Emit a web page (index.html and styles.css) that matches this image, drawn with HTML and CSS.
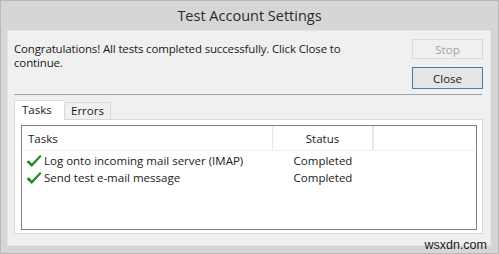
FILE: index.html
```html
<!DOCTYPE html>
<html lang="en">
<head>
  <meta charset="UTF-8" />
  <title>Test Account Settings</title>
  <link rel="stylesheet" href="styles.css">
</head>
<body>
  <div class="window">
    <div class="titlebar">Test Account Settings</div>

    <div class="client">
      <div class="top-row">
        <p class="message">Congratulations! All tests completed successfully. Click Close to continue.</p>
        <div class="buttons">
          <button class="btn btn-disabled" disabled>Stop</button>
          <button class="btn btn-default">Close</button>
        </div>
      </div>

      <div class="separator"></div>

      <div class="tabs">
        <div class="tab tab-active">Tasks</div>
        <div class="tab">Errors</div>
      </div>

      <div class="tab-panel">
        <div class="list-view">
          <div class="list-header">
            <div class="col col-task">Tasks</div>
            <div class="col col-status">Status</div>
            <div class="col col-rest"></div>
          </div>
          <div class="list-row">
            <div class="col col-task">
              <svg class="check" width="16" height="14" viewBox="0 0 16 14">
                <path d="M0.5 8 L2.8 6.3 L5.8 9.6 L14 1 L15.6 2.3 L5.8 13 Z" fill="#1e8c1e"/>
              </svg>
              Log onto incoming mail server (IMAP)
            </div>
            <div class="col col-status">Completed</div>
          </div>
          <div class="list-row">
            <div class="col col-task">
              <svg class="check" width="16" height="14" viewBox="0 0 16 14">
                <path d="M0.5 8 L2.8 6.3 L5.8 9.6 L14 1 L15.6 2.3 L5.8 13 Z" fill="#1e8c1e"/>
              </svg>
              Send test e-mail message
            </div>
            <div class="col col-status">Completed</div>
          </div>
        </div>
      </div>
    </div>

    <div class="watermark">wsxdn.com</div>
  </div>
</body>
</html>
```

FILE: styles.css
```css
* {
  box-sizing: border-box;
  margin: 0;
  padding: 0;
}

body {
  width: 499px;
  height: 254px;
  overflow: hidden;
  font-family: 'Open Sans', 'Noto Sans', sans-serif;
  color: #1a1a1a;
}

/* Window frame */
.window {
  position: relative;
  width: 499px;
  height: 254px;
  background-color: #d6d6d6;
  border: 1px solid #b9b9b9;
  display: flex;
  flex-direction: column;
}

.titlebar {
  height: 29px;
  font-size: 14.5px;
  color: #2b2b2b;
  text-align: center;
  line-height: 29px;
}

/* Client area */
.client {
  margin: 0 7px 7px 6px;
  flex: 1;
  background-color: #f0f0f0;
  border: 1px solid #e6e6e6;
  padding: 8px 7px 11px 6px;
  display: flex;
  flex-direction: column;
}

.top-row {
  display: flex;
  justify-content: space-between;
}

.message {
  width: 330px;
  font-size: 11.5px;
  line-height: 14px;
  padding-top: 3px;
  letter-spacing: -0.15px;
}

.buttons {
  display: flex;
  flex-direction: column;
  gap: 8px;
}

.btn {
  width: 71px;
  font-family: inherit;
  font-size: 11.5px;
  border: 1px solid #adadad;
  background-color: #e1e1e1;
  color: #1a1a1a;
}

.btn-disabled {
  height: 20px;
  background-color: #f0f0f0;
  border-color: #d9d9d9;
  color: #a3a3a3;
}

.btn-default {
  height: 22px;
  border-color: #3c7fb1;
  background-color: #e5e5e5;
}

.separator {
  height: 1px;
  background-color: #a0a0a0;
  margin: 5px 1px 0 0;
}

/* Tabs */
.tabs {
  display: flex;
  align-items: flex-end;
  height: 24px;
  font-size: 11.5px;
}

.tab {
  height: 17px;
  padding: 0 6px;
  border: 1px solid #d9d9d9;
  border-bottom: none;
  background-color: #f0f0f0;
  line-height: 16px;
}

.tab-active {
  height: 20px;
  width: 50px;
  padding: 0 7px;
  background-color: #ffffff;
  border-right: none;
  line-height: 18px;
  position: relative;
  top: 1px;
}

.tab-panel {
  flex: 1;
  background-color: #ffffff;
  border: 1px solid #d9d9d9;
  padding: 5px 5px 3px 6px;
  display: flex;
}

/* List view */
.list-view {
  flex: 1;
  border: 1px solid #828282;
  background-color: #ffffff;
  font-size: 11.5px;
}

.list-header {
  display: flex;
  height: 25px;
  line-height: 25px;
  border-bottom: 1px solid #f0f0f0;
}

.list-header .col {
  border-right: 1px solid #e5e5e5;
}

.col-task {
  width: 251px;
  padding-left: 6px;
  display: flex;
  align-items: center;
}

.col-status {
  width: 100px;
  text-align: center;
}

.col-rest {
  width: 1px;
}

.list-row {
  display: flex;
  height: 17px;
  line-height: 17px;
}

.list-header + .list-row {
  margin-top: 1px;
}

.list-row .col-task {
  padding-left: 4px;
}

.check {
  margin-right: 2px;
}

.watermark {
  position: absolute;
  right: 11px;
  bottom: 1px;
  font-family: 'Liberation Sans', sans-serif;
  font-size: 12.5px;
  color: #1a1a1a;
  line-height: 13px;
}
```
